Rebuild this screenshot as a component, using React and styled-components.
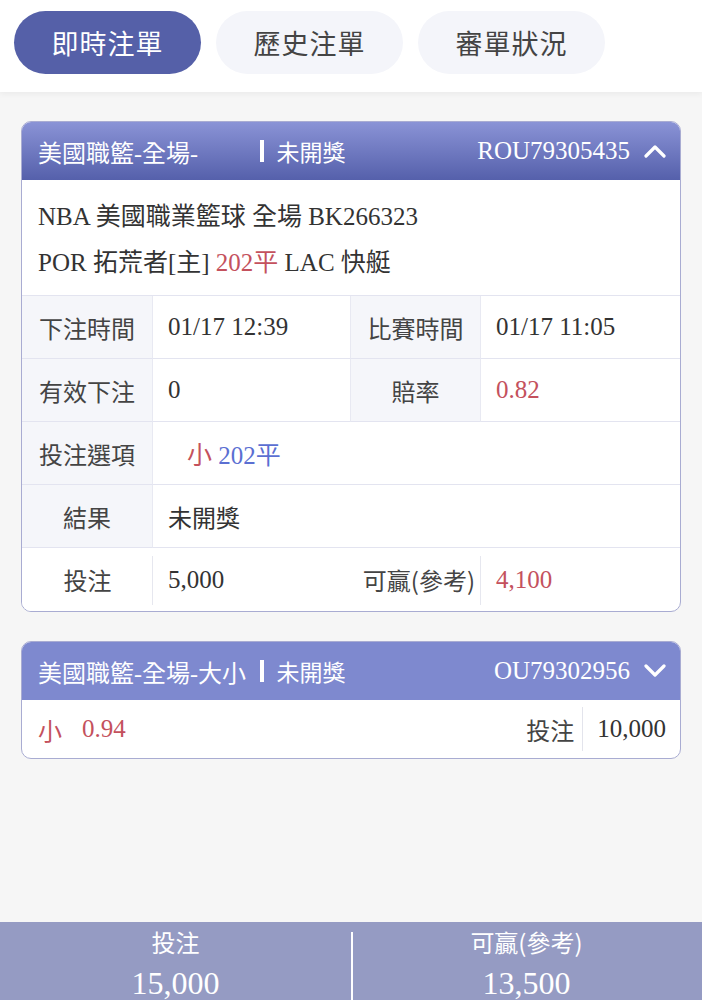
import React from "react";
import styled, { createGlobalStyle } from "styled-components";

const GlobalStyle = createGlobalStyle`
  html, body {
    margin: 0;
    padding: 0;
    background: #f6f6f6;
  }
  * {
    box-sizing: border-box;
  }
`;

const SERIF = `"Liberation Serif", "Noto Sans CJK TC", serif`;
const SANS = `"Noto Sans CJK TC", "Noto Sans", sans-serif`;

const Page = styled.div`
  min-height: 100vh;
  display: flex;
  flex-direction: column;
  font-family: ${SERIF};
  color: #333;
`;

const TopBar = styled.div`
  height: 92px;
  background: #fff;
  display: flex;
  align-items: center;
  gap: 15px;
  padding: 0 14px 8px;
  box-shadow: 0 2px 6px rgba(0, 0, 0, 0.05);
  position: relative;
  z-index: 1;
`;

const Tab = styled.div`
  width: 187px;
  height: 63px;
  border-radius: 32px;
  display: flex;
  align-items: center;
  justify-content: center;
  font-family: ${SANS};
  font-size: 27px;
  letter-spacing: 1px;
  background: ${(p) => (p.$active ? "#5560a8" : "#f4f5fa")};
  color: ${(p) => (p.$active ? "#fff" : "#444")};
`;

const Content = styled.div`
  flex: 1;
  padding: 29px 21px 0;
  display: flex;
  flex-direction: column;
  gap: 29px;
`;

const Card = styled.div`
  background: #fff;
  border: 1.5px solid #a9acd2;
  border-radius: 10px;
  overflow: hidden;
`;

const CardHeader = styled.div`
  height: 58px;
  display: flex;
  align-items: center;
  padding: 0 14px 0 16px;
  color: #fff;
  background: ${(p) =>
    p.$open ? "linear-gradient(#8a93d6, #5560ab)" : "#7e89cf"};
`;

const Title = styled.div`
  width: 222px;
  font-size: 24px;
  white-space: nowrap;
`;

const Status = styled.div`
  display: flex;
  align-items: center;
  font-family: ${SANS};
  font-size: 23px;
  &::before {
    content: "";
    width: 3.5px;
    height: 22px;
    background: #fff;
    margin-right: 13px;
  }
`;

const OrderNo = styled.div`
  margin-left: auto;
  font-size: 25px;
  display: flex;
  align-items: center;
  gap: 14px;
`;

const Info = styled.div`
  height: 116px;
  padding: 0 16px 2px;
  display: flex;
  flex-direction: column;
  justify-content: center;
  gap: 10px;
  font-size: 25px;
  border-bottom: 1.5px solid #e3e4f0;
`;

const Red = styled.span`
  color: ${(p) => (p.$blue ? "#5b6fd2" : "#c4515d")};
`;

const Table = styled.div`
  display: grid;
  grid-template-columns: 131px 198px 130px 1fr;
  grid-auto-rows: 63px;
`;

const Label = styled.div`
  display: flex;
  align-items: center;
  justify-content: ${(p) => (p.$right ? "flex-end" : "center")};
  padding: 0 ${(p) => (p.$right ? "6px" : "0")} 0 0;
  font-family: ${SANS};
  font-size: 24px;
  color: #444;
  background: ${(p) => (p.$plain ? "#fff" : "#f5f6fa")};
  border-bottom: ${(p) => (p.$last ? "none" : "1.5px solid #e3e4f0")};
  border-right: ${(p) => (p.$last ? "none" : "1.5px solid #e8e9f2")};
  position: relative;
  ${(p) =>
    p.$last &&
    `&::after {
      content: "";
      position: absolute;
      right: 0;
      top: 8px;
      bottom: 6px;
      width: 1.5px;
      background: #e6e7ef;
    }`}
`;

const Value = styled.div`
  display: flex;
  align-items: center;
  padding-left: ${(p) => p.$indent || 15}px;
  font-size: 25px;
  color: ${(p) => (p.$red ? "#c4515d" : "#333")};
  grid-column: ${(p) => (p.$span ? "span 3" : "auto")};
  border-bottom: ${(p) => (p.$last ? "none" : "1.5px solid #e3e4f0")};
  border-right: ${(p) => (p.$edge || p.$last ? "none" : "1.5px solid #e8e9f2")};
`;

const ValueSans = styled.span`
  font-family: ${SANS};
  font-size: 24px;
`;

const SummaryRow = styled.div`
  height: 58px;
  display: flex;
  align-items: center;
  padding: 0 14px 0 16px;
  font-size: 25px;
`;

const Odds = styled.div`
  color: #c4515d;
  display: flex;
  gap: 20px;
  align-items: center;
`;

const Stake = styled.div`
  margin-left: auto;
  display: flex;
  align-items: center;
  height: 44px;
`;

const StakeLabel = styled.span`
  font-family: ${SANS};
  font-size: 24px;
  color: #444;
  padding-right: 8px;
  border-right: 1.5px solid #e3e4ec;
  height: 100%;
  display: flex;
  align-items: center;
`;

const StakeValue = styled.span`
  padding-left: 14px;
`;

const BottomBar = styled.div`
  height: 78px;
  background: #959bc3;
  display: flex;
  color: #fff;
  padding-top: 4px;
`;

const Half = styled.div`
  flex: 1;
  display: flex;
  flex-direction: column;
  align-items: center;
  position: relative;
  & + &::before {
    content: "";
    position: absolute;
    left: 0;
    top: 6px;
    bottom: -6px;
    width: 1.5px;
    background: #fff;
  }
`;

const SumLabel = styled.div`
  font-family: ${SANS};
  font-size: 24px;
  line-height: 32px;
`;

const SumValue = styled.div`
  font-size: 32px;
  line-height: 50px;
`;

const Chevron = ({ up }) => (
  <svg width="22" height="14" viewBox="0 0 22 14">
    <polyline
      points={up ? "2,12 11,3 20,12" : "2,2 11,11 20,2"}
      fill="none"
      stroke="#fff"
      strokeWidth="3.2"
      strokeLinecap="round"
      strokeLinejoin="round"
    />
  </svg>
);

export default function App() {
  return (
    <Page>
      <GlobalStyle />
      <TopBar>
        <Tab $active>即時注單</Tab>
        <Tab>歷史注單</Tab>
        <Tab>審單狀況</Tab>
      </TopBar>

      <Content>
        <Card>
          <CardHeader $open>
            <Title>美國職籃-全場-</Title>
            <Status>未開獎</Status>
            <OrderNo>
              ROU79305435
              <Chevron up />
            </OrderNo>
          </CardHeader>
          <Info>
            <div>NBA 美國職業籃球 全場 BK266323</div>
            <div>
              POR 拓荒者[主] <Red>202平</Red> LAC 快艇
            </div>
          </Info>
          <Table>
            <Label>下注時間</Label>
            <Value>01/17 12:39</Value>
            <Label>比賽時間</Label>
            <Value $edge>01/17 11:05</Value>

            <Label>有效下注</Label>
            <Value>0</Value>
            <Label>賠率</Label>
            <Value $edge $red>0.82</Value>

            <Label>投注選項</Label>
            <Value $span $edge $indent={34}>
              <Red>小</Red>&nbsp;<Red $blue>202平</Red>
            </Value>

            <Label>結果</Label>
            <Value $span $edge>
              <ValueSans>未開獎</ValueSans>
            </Value>

            <Label $plain $last>投注</Label>
            <Value $last>5,000</Value>
            <Label $plain $last $right>可贏(參考)</Label>
            <Value $last $red>4,100</Value>
          </Table>
        </Card>

        <Card>
          <CardHeader>
            <Title>美國職籃-全場-大小</Title>
            <Status>未開獎</Status>
            <OrderNo>
              OU79302956
              <Chevron />
            </OrderNo>
          </CardHeader>
          <SummaryRow>
            <Odds>
              <ValueSans>小</ValueSans>
              <span>0.94</span>
            </Odds>
            <Stake>
              <StakeLabel>投注</StakeLabel>
              <StakeValue>10,000</StakeValue>
            </Stake>
          </SummaryRow>
        </Card>
      </Content>

      <BottomBar>
        <Half>
          <SumLabel>投注</SumLabel>
          <SumValue>15,000</SumValue>
        </Half>
        <Half>
          <SumLabel>可贏(參考)</SumLabel>
          <SumValue>13,500</SumValue>
        </Half>
      </BottomBar>
    </Page>
  );
}
